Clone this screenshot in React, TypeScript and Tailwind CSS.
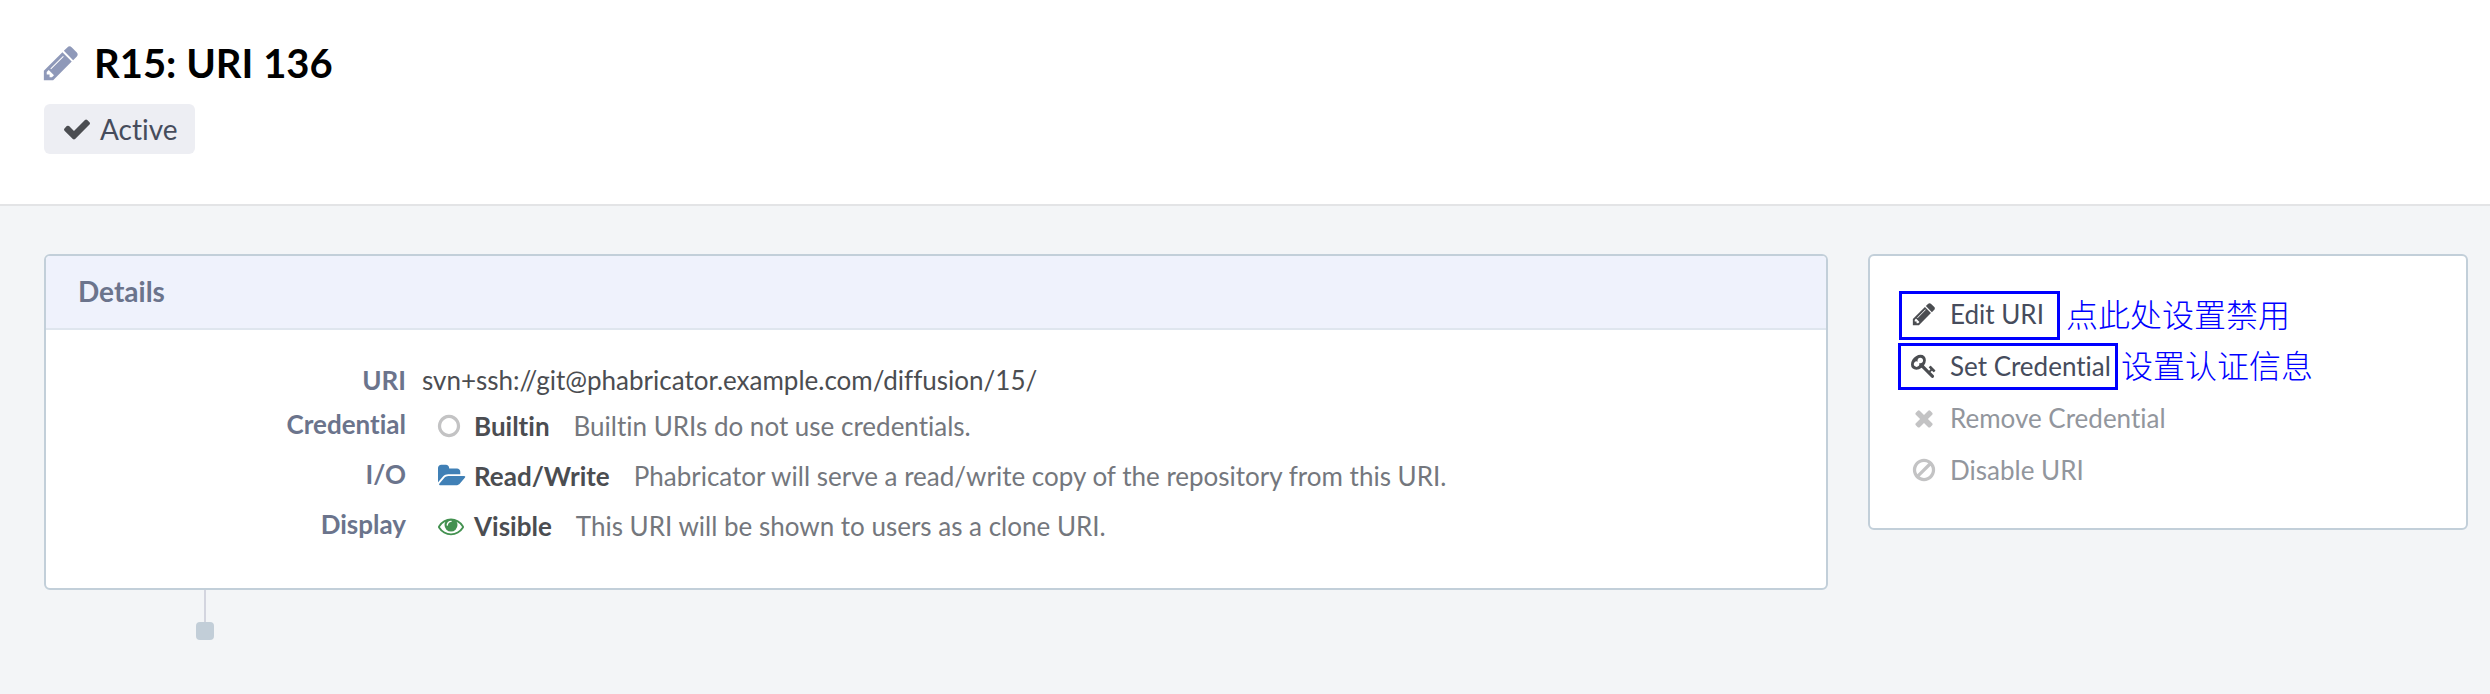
import type { ReactNode } from "react";

const ICONS = {
  pencil:
    "M491 1536l91-91-235-235-91 91v107h128v128h107zm523-928q0-22-22-22-10 0-17 7l-542 542q-7 7-7 17 0 22 22 22 10 0 17-7l542-542q7-7 7-17zm-54-192l416 416-832 832h-416v-416zm683 96q0 53-37 90l-166 166-416-416 166-165q36-38 90-38 53 0 91 38l235 234q37 39 37 91z",
  check:
    "M1671 566q0 40-28 68l-724 724-136 136q-28 28-68 28t-68-28l-136-136-362-362q-28-28-28-68t28-68l136-136q28-28 68-28t68 28l294 295 656-657q28-28 68-28t68 28l136 136q28 28 28 68z",
  times:
    "M1490 1322q0 40-28 68l-136 136q-28 28-68 28t-68-28l-294-294-294 294q-28 28-68 28t-68-28l-136-136q-28-28-28-68t28-68l294-294-294-294q-28-28-28-68t28-68l136-136q28-28 68-28t68 28l294 294 294-294q28-28 68-28t68 28l136 136q28 28 28 68t-28 68l-294 294 294 294q28 28 28 68z",
  ban: "M1440 893q0-161-87-295l-754 753q137 89 297 89 111 0 211.5-43.5t173.5-116.5 116-174.5 43-212.5zm-999 299l755-754q-135-91-300-91-148 0-273 73t-198 199-73 274q0 162 89 299zm1223-299q0 157-61 300t-163.5 246-245 164-298.5 61-298.5-61-245-164-163.5-246-61-300 61-299.5 163.5-245.5 245-164 298.5-61 298.5 61 245 164 163.5 245.5 61 299.5z",
  circle:
    "M896 352q-148 0-273 73t-198 198-73 273 73 273 198 198 273 73 273-73 198-198 73-273-73-273-198-198-273-73zm768 544q0 209-103 385.5t-279.5 279.5-385.5 103-385.5-103-279.5-279.5-103-385.5 103-385.5 279.5-279.5 385.5-103 385.5 103 279.5 279.5 103 385.5z",
  folder:
    "M1879 952q0 31-31 66l-336 396q-43 51-120.5 86.5t-143.5 35.5h-1088q-34 0-60.5-13t-26.5-43q0-31 31-66l336-396q43-51 120.5-86.5t143.5-35.5h1088q34 0 60.5 13t26.5 43zm-343-344v160h-832q-94 0-197 47.5t-164 119.5l-337 396-5 6q0-4-.5-12.5t-.5-12.5v-960q0-92 66-158t158-66h320q92 0 158 66t66 158v32h544q92 0 158 66t66 158z",
  eye: "M1664 960q-152-236-381-353 61 104 61 225 0 185-131.5 316.5t-316.5 131.5-316.5-131.5-131.5-316.5q0-121 61-225-229 117-381 353 133 205 333.5 326.5t434.5 121.5 434.5-121.5 333.5-326.5zm-720-384q0-20-14-34t-34-14q-125 0-214.5 89.5t-89.5 214.5q0 20 14 34t34 14 34-14 14-34q0-86 61-147t147-61q20 0 34-14t14-34zm848 384q0 34-20 69-140 230-376.5 368.5t-499.5 138.5-499.5-139-376.5-368q-20-35-20-69t20-69q140-229 376.5-368t499.5-139 499.5 139 376.5 368q20 35 20 69z",
  key: "M832 512q0-80-56-136t-136-56-136 56-56 136q0 42 19 83-41-19-83-19-80 0-136 56t-56 136 56 136 136 56 136-56 56-136q0-42-19-83 41 19 83 19 80 0 136-56t56-136zm851 704q0 17-49 66t-66 49q-9 0-28.5-16t-36.5-33-38.5-40-24.5-26l-96 96 220 220q28 28 28 68 0 42-39 81t-81 39q-40 0-68-28l-671-671q-176 131-365 131-163 0-265.5-102.5t-102.5-265.5q0-160 95-313t248-248 313-95q163 0 265.5 102.5t102.5 265.5q0 189-131 365l355 355 96-96q-3-3-26-24.5t-40-38.5-33-36.5-16-28.5q0-17 49-66t66-49q13 0 23 10 6 6 46 44.5t82 79.5 86.5 86 73 78 28.5 41z",
};

type IconName = keyof typeof ICONS;

function Icon({ name, className }: { name: IconName; className: string }) {
  return (
    <svg viewBox="0 0 1792 1792" className={`shrink-0 overflow-visible ${className}`} fill="currentColor" aria-hidden="true">
      <path d={ICONS[name]} />
    </svg>
  );
}

function Row({ label, children }: { label: string; children: ReactNode }) {
  return (
    <div className="flex h-[50px]">
      <dt className="w-[360px] shrink-0 text-right font-bold text-[#6b748c]">{label}</dt>
      <dd className="flex pt-[2px] pl-[32px]">{children}</dd>
    </div>
  );
}

function Status({ icon, title, note }: { icon: ReactNode; title: string; note: string }) {
  return (
    <>
      <span className="flex h-[36px] w-[36px] items-center">{icon}</span>
      <strong className="font-bold text-[#4b4d51]">{title}</strong>
      <span className="ml-[24px] text-[#74777d]">{note}</span>
    </>
  );
}

function Action({ icon, label, disabled, children }: { icon: IconName; label: string; disabled?: boolean; children?: ReactNode }) {
  return (
    <li className="relative flex h-[52px] items-center">
      <span className={`flex w-[30px] justify-center ${disabled ? "text-[#c3c3c4]" : "text-[#4b4d51]"}`}>
        <Icon name={icon} className="size-[26px]" />
      </span>
      <span className={`ml-[11px] ${disabled ? "text-[#92969d]" : "text-[#464c5c]"}`}>{label}</span>
      {children}
    </li>
  );
}

export default function App() {
  return (
    <div className="flex h-[694px] w-[2490px] flex-col overflow-hidden bg-[#f3f5f7] font-['Lato','Noto_Sans_CJK_SC',sans-serif] text-[26px] leading-[36px] [font-variant-ligatures:no-common-ligatures]">
      <header className="h-[206px] border-b-2 border-[#e3e4e6] bg-white pl-[44px] pt-[38px]">
        <div className="flex h-[50px] items-center">
          <Icon name="pencil" className="size-[40px] -ml-[3px] text-[#8f99b9]" />
          <h1 className="ml-[13px] text-[40px] font-bold leading-[50px] text-black">R15: URI 136</h1>
        </div>
        <div className="mt-[16px] flex h-[50px] w-[151px] items-center rounded-[6px] bg-[#edeef3] pl-[18px]">
          <Icon name="check" className="size-[30px] text-[#4b4d51]" />
          <span className="ml-[8px] text-[28px] text-[#464c5c]">Active</span>
        </div>
      </header>

      <main className="flex items-start gap-[40px] pl-[44px] pt-[48px]">
        <div className="w-[1784px]">
          <section className="h-[336px] overflow-hidden rounded-[6px] border-2 border-[#c2cfd9] bg-white">
            <h2 className="h-[74px] border-b-2 border-[#dfe6ee] bg-[#eff2fc] pl-[32px] text-[28px] font-bold leading-[71px] text-[#6b748c]">
              Details
            </h2>
            <dl className="pt-[32px]">
              <div className="flex h-[44px]">
                <dt className="w-[360px] shrink-0 text-right font-bold text-[#6b748c]">URI</dt>
                <dd className="pl-[16px] text-[#4b4d51]">svn+ssh://git@phabricator.example.com/diffusion/15/</dd>
              </div>
              <Row label="Credential">
                <Status
                  icon={<Icon name="circle" className="-ml-[2px] size-[26px] text-[#c3c3c4]" />}
                  title="Builtin"
                  note="Builtin URIs do not use credentials."
                />
              </Row>
              <Row label="I/O">
                <Status
                  icon={<Icon name="folder" className="size-[26px] text-[#4080b6]" />}
                  title="Read/Write"
                  note="Phabricator will serve a read/write copy of the repository from this URI."
                />
              </Row>
              <Row label="Display">
                <Status
                  icon={<Icon name="eye" className="size-[26px] text-[#439150]" />}
                  title="Visible"
                  note="This URI will be shown to users as a clone URI."
                />
              </Row>
            </dl>
          </section>
          <div className="ml-[152px] flex w-[18px] flex-col items-center">
            <div className="h-[32px] w-[2px] bg-[#d3d5df]" />
            <div className="size-[18px] rounded-[4px] bg-[#c2ced8]" />
          </div>
        </div>

        <aside className="h-[276px] w-[600px] rounded-[6px] border-2 border-[#c2cfd9] bg-white pl-[39px] pt-[32px]">
          <ul>
            <Action icon="pencil" label="Edit URI">
              <span className="absolute left-[-10px] top-[3px] h-[49px] w-[161px] border-3 border-[#0000ff]" />
              <span className="absolute left-[157px] top-px whitespace-nowrap font-['Noto_Sans_CJK_SC',sans-serif] text-[32px] font-light leading-[48px] text-[#0000ff]">
                点此处设置禁用
              </span>
            </Action>
            <Action icon="key" label="Set Credential">
              <span className="absolute left-[-11px] top-[3px] h-[47px] w-[220px] border-3 border-[#0000ff]" />
              <span className="absolute left-[212px] top-0 whitespace-nowrap font-['Noto_Sans_CJK_SC',sans-serif] text-[32px] font-light leading-[48px] text-[#0000ff]">
                设置认证信息
              </span>
            </Action>
            <Action icon="times" label="Remove Credential" disabled />
            <Action icon="ban" label="Disable URI" disabled />
          </ul>
        </aside>
      </main>
    </div>
  );
}
